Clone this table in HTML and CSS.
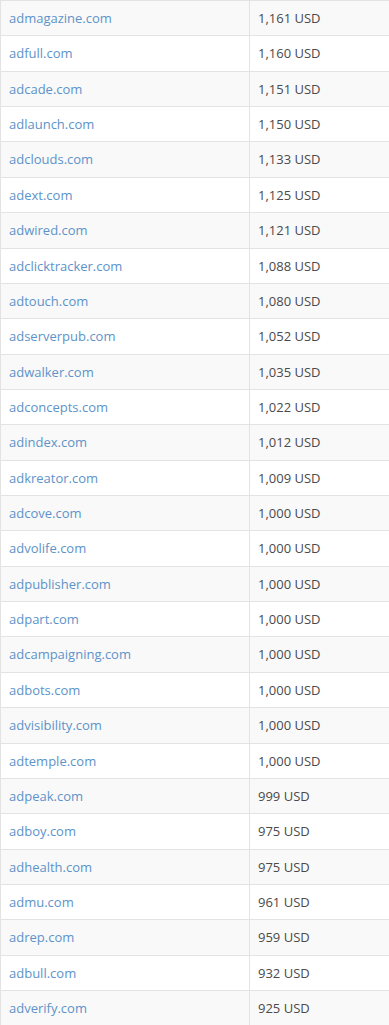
FILE: index.html
```html
<!DOCTYPE html>
<html>
<head>
<meta charset="utf-8">
<link rel="stylesheet" href="styles.css">
</head>
<body>
<table class="tbl">
<tbody>
<tr><td class="dom"><a href="#">admagazine.com</a></td><td class="val">1,161 USD</td></tr>
<tr><td class="dom"><a href="#">adfull.com</a></td><td class="val">1,160 USD</td></tr>
<tr><td class="dom"><a href="#">adcade.com</a></td><td class="val">1,151 USD</td></tr>
<tr><td class="dom"><a href="#">adlaunch.com</a></td><td class="val">1,150 USD</td></tr>
<tr><td class="dom"><a href="#">adclouds.com</a></td><td class="val">1,133 USD</td></tr>
<tr><td class="dom"><a href="#">adext.com</a></td><td class="val">1,125 USD</td></tr>
<tr><td class="dom"><a href="#">adwired.com</a></td><td class="val">1,121 USD</td></tr>
<tr><td class="dom"><a href="#">adclicktracker.com</a></td><td class="val">1,088 USD</td></tr>
<tr><td class="dom"><a href="#">adtouch.com</a></td><td class="val">1,080 USD</td></tr>
<tr><td class="dom"><a href="#">adserverpub.com</a></td><td class="val">1,052 USD</td></tr>
<tr><td class="dom"><a href="#">adwalker.com</a></td><td class="val">1,035 USD</td></tr>
<tr><td class="dom"><a href="#">adconcepts.com</a></td><td class="val">1,022 USD</td></tr>
<tr><td class="dom"><a href="#">adindex.com</a></td><td class="val">1,012 USD</td></tr>
<tr><td class="dom"><a href="#">adkreator.com</a></td><td class="val">1,009 USD</td></tr>
<tr><td class="dom"><a href="#">adcove.com</a></td><td class="val">1,000 USD</td></tr>
<tr><td class="dom"><a href="#">advolife.com</a></td><td class="val">1,000 USD</td></tr>
<tr><td class="dom"><a href="#">adpublisher.com</a></td><td class="val">1,000 USD</td></tr>
<tr><td class="dom"><a href="#">adpart.com</a></td><td class="val">1,000 USD</td></tr>
<tr><td class="dom"><a href="#">adcampaigning.com</a></td><td class="val">1,000 USD</td></tr>
<tr><td class="dom"><a href="#">adbots.com</a></td><td class="val">1,000 USD</td></tr>
<tr><td class="dom"><a href="#">advisibility.com</a></td><td class="val">1,000 USD</td></tr>
<tr><td class="dom"><a href="#">adtemple.com</a></td><td class="val">1,000 USD</td></tr>
<tr><td class="dom"><a href="#">adpeak.com</a></td><td class="val">999 USD</td></tr>
<tr><td class="dom"><a href="#">adboy.com</a></td><td class="val">975 USD</td></tr>
<tr><td class="dom"><a href="#">adhealth.com</a></td><td class="val">975 USD</td></tr>
<tr><td class="dom"><a href="#">admu.com</a></td><td class="val">961 USD</td></tr>
<tr><td class="dom"><a href="#">adrep.com</a></td><td class="val">959 USD</td></tr>
<tr><td class="dom"><a href="#">adbull.com</a></td><td class="val">932 USD</td></tr>
<tr><td class="dom"><a href="#">adverify.com</a></td><td class="val">925 USD</td></tr>
</tbody>
</table>
</body>
</html>
```
FILE: styles.css
```css
html, body {
  margin: 0;
  padding: 0;
  background: #ffffff;
}
body {
  font-family: "Open Sans", "Liberation Sans", sans-serif;
  font-size: 13px;
  color: #4a4a4a;
  overflow: hidden;
}
.tbl {
  border-collapse: collapse;
  width: 400px;
  table-layout: fixed;
}
.tbl tr:nth-child(odd) td {
  background: #f9f9f9;
}
.tbl td {
  border: 1px solid #e3e3e3;
  padding: 8px 8px;
  line-height: 18.36px;
  vertical-align: middle;
  white-space: nowrap;
}
.tbl .dom {
  width: 232px;
}
.tbl a {
  color: #5d93c9;
  text-decoration: none;
}
```
